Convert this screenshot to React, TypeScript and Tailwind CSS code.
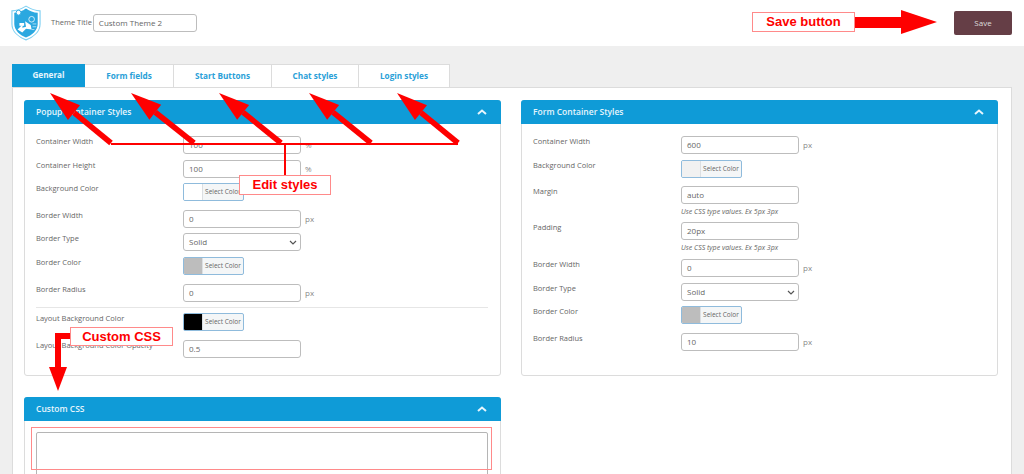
import React from "react";

const font = "font-['Open_Sans',sans-serif]";

function Chevron() {
  return (
    <svg width="10" height="6" viewBox="0 0 10 6" className="block">
      <path d="M1 5 L5 1.5 L9 5" fill="none" stroke="#e6f5fc" strokeWidth="2" />
    </svg>
  );
}

function Card({ title, className, children }: { title: string; className: string; children: React.ReactNode }) {
  return (
    <section className={`border border-[#dcdcdc] rounded-[3px] bg-white ${className}`}>
      <header className="h-[24px] -mx-px -mt-px bg-[#0f9bd7] rounded-t-[3px] flex items-center justify-between pl-[12px] pr-[14px]">
        <h2 className="text-[8.5px] font-semibold text-[#e6f5fc]">{title}</h2>
        <Chevron />
      </header>
      {children}
    </section>
  );
}

function Row({ label, mt, children, labelW }: { label: string; mt: string; labelW: string; children: React.ReactNode }) {
  return (
    <div className={`flex items-start ${mt}`}>
      <label className={`${labelW} text-[7.5px] leading-[12px] text-[#666] -mt-[1px] shrink-0`}>{label}</label>
      {children}
    </div>
  );
}

function TextInput({ value, unit }: { value: string; unit?: string }) {
  return (
    <div className="flex items-center">
      <div className="w-[118px] h-[18px] border border-[#bdbdbd] rounded-[3px] bg-white flex items-center pl-[5px] text-[8px] text-[#666]">
        {value}
      </div>
      {unit && <span className="ml-[4px] text-[8px] text-[#888]">{unit}</span>}
    </div>
  );
}

function SelectInput() {
  return (
    <div className="w-[118px] h-[18px] border border-[#bdbdbd] rounded-[3px] bg-white flex items-center justify-between pl-[5px] pr-[3px] text-[8px] text-[#666]">
      Solid
      <svg width="8" height="5" viewBox="0 0 8 5"><path d="M1 1 L4 4 L7 1" fill="none" stroke="#555" strokeWidth="1.2" /></svg>
    </div>
  );
}

function ColorBtn({ swatch }: { swatch: string }) {
  return (
    <div className="w-[61px] h-[18px] border border-[#8fbbdc] rounded-[2px] flex overflow-hidden bg-[#f4f6f7]">
      <span className={`w-[18px] h-full ${swatch}`} />
      <span className="flex-1 flex items-center justify-center text-[6.5px] text-[#666] border-l border-[#dcdfe2]">Select Color</span>
    </div>
  );
}

function Hint() {
  return <p className="text-[7px] italic text-[#666] leading-[9px] mt-[3px]">Use CSS type values. Ex 5px 3px</p>;
}

function Arrow({ x, y, tx, ty }: { x: number; y: number; tx: number; ty: number }) {
  const dx = tx - x;
  const dy = ty - y;
  const len = Math.hypot(dx, dy);
  const ux = dx / len;
  const uy = dy / len;
  const bx = tx - ux * 31;
  const by = ty - uy * 31;
  const px = -uy * 9.5;
  const py = ux * 9.5;
  return (
    <g>
      <line x1={x} y1={y} x2={bx} y2={by} stroke="#fe0000" strokeWidth="5.5" />
      <polygon points={`${tx},${ty} ${bx + px},${by + py} ${bx - px},${by - py}`} fill="#fe0000" />
    </g>
  );
}

function Callout({ text, className }: { text: string; className: string }) {
  return (
    <div className={`absolute border border-[#ff8a8a] bg-white flex items-center justify-center font-['Liberation_Sans',sans-serif] font-bold text-[13px] text-[#fe0000] ${className}`}>
      {text}
    </div>
  );
}

function Logo() {
  return (
    <svg width="30" height="36" viewBox="0 0 32 38" className="block">
      <path d="M1 6 C7 6 11 4 16 1 C21 4 26 6 31 6 L31 20 C31 28 24 34 16 37 C8 34 1 28 1 20 Z" fill="none" stroke="#7fd0f2" strokeWidth="1.2" />
      <path d="M3.5 8 C9 8 12 6 16 3.5 C20 6 24 8 28.5 8 L28.5 20 C28.5 27 22 32 16 34.5 C10 32 3.5 27 3.5 20 Z" fill="#2ba8e0" />
      <circle cx="8" cy="8" r="2.6" fill="#fff" stroke="#2ba8e0" />
      <circle cx="22" cy="15" r="3" fill="none" stroke="#fff" strokeWidth=".8" />
      <path d="M7 26 L13 20 L12 24 L16 23 L15 17 L21 21 L22 26 L16 25 L12 29 Z" fill="#fff" />
      <path d="M9 19 h5 v3 h-5 z" fill="#fff" />
      <path d="M23 20 h4 M23 23 h4 M22 26 h3" stroke="#cdeefb" strokeWidth=".8" />
    </svg>
  );
}

const L = "w-[147px]";
const R = "w-[148px]";

export default function App() {
  return (
    <div className={`relative w-[1024px] h-[474px] overflow-hidden bg-[#efefef] ${font}`}>
      <header className="h-[46px] bg-white flex items-center pl-[11px] pr-[12px]">
        <Logo />
        <span className="ml-[10px] text-[7.5px] text-[#666]">Theme Title</span>
        <div className="ml-[1px] w-[104px] h-[18px] border border-[#bdbdbd] rounded-[3px] flex items-center pl-[5px] text-[8px] text-[#666]">Custom Theme 2</div>
        <button className="ml-auto w-[58px] h-[24px] bg-[#653e46] rounded-[2px] text-[8px] text-[#ddd]">Save</button>
      </header>

      <main className="pl-[12px] pr-[12px] pt-[18px]">
        <nav className="flex h-[23px] text-[8.2px] font-bold text-[#2a9fd8]">
          <div className="w-[73px] bg-[#0f9bd7] text-[#e6f5fc] flex items-center justify-center">General</div>
          <div className="w-[89px] bg-white border-r border-t border-[#dcdcdc] flex items-center justify-center">Form fields</div>
          <div className="w-[98px] bg-white border-r border-t border-[#dcdcdc] flex items-center justify-center">Start Buttons</div>
          <div className="w-[87px] bg-white border-r border-t border-[#dcdcdc] flex items-center justify-center">Chat styles</div>
          <div className="w-[91px] bg-white border-r border-t border-[#dcdcdc] flex items-center justify-center">Login styles</div>
        </nav>
        <div className="h-[400px] bg-white border border-[#dcdcdc] px-[11px] pt-[12px] grid grid-cols-[477px_477px] gap-x-[20px] content-start">
          <div>
            <Card title="Popup Container Styles" className="h-[276px]">
              <div className="pt-[12px] pl-[11px] pr-[12px]">
                <Row labelW={L} mt="" label="Container Width"><TextInput value="100" unit="%" /></Row>
                <Row labelW={L} mt="mt-[6px]" label="Container Height"><TextInput value="100" unit="%" /></Row>
                <Row labelW={L} mt="mt-[5px]" label="Background Color"><ColorBtn swatch="bg-white" /></Row>
                <Row labelW={L} mt="mt-[9px]" label="Border Width"><TextInput value="0" unit="px" /></Row>
                <Row labelW={L} mt="mt-[5px]" label="Border Type"><SelectInput /></Row>
                <Row labelW={L} mt="mt-[6px]" label="Border Color"><ColorBtn swatch="bg-[#bdbdbd]" /></Row>
                <Row labelW={L} mt="mt-[9px]" label="Border Radius"><TextInput value="0" unit="px" /></Row>
                <div className="h-px bg-[#e6e6e6] mt-[5px] mb-[5px]" />
                <Row labelW={L} mt="" label="Layout Background Color"><ColorBtn swatch="bg-black" /></Row>
                <Row labelW={L} mt="mt-[9px]" label="Layout Background Color Opacity"><TextInput value="0.5" /></Row>
              </div>
            </Card>
            <Card title="Custom CSS" className="mt-[21px] h-[120px]">
              <div className="mt-[11px] ml-[11px] mr-[12px] h-[90px] border border-[#b5b5b5] rounded-[2px]" />
            </Card>
          </div>
          <Card title="Form Container Styles" className="h-[276px]">
            <div className="pt-[12px] pl-[11px] pr-[12px]">
              <Row labelW={R} mt="" label="Container Width"><TextInput value="600" unit="px" /></Row>
              <Row labelW={R} mt="mt-[6px]" label="Background Color"><ColorBtn swatch="bg-[#f1f1f1]" /></Row>
              <Row labelW={R} mt="mt-[8px]" label="Margin"><div><TextInput value="auto" /><Hint /></div></Row>
              <Row labelW={R} mt="mt-[6px]" label="Padding"><div><TextInput value="20px" /><Hint /></div></Row>
              <Row labelW={R} mt="mt-[7px]" label="Border Width"><TextInput value="0" unit="px" /></Row>
              <Row labelW={R} mt="mt-[6px]" label="Border Type"><SelectInput /></Row>
              <Row labelW={R} mt="mt-[5px]" label="Border Color"><ColorBtn swatch="bg-[#bdbdbd]" /></Row>
              <Row labelW={R} mt="mt-[9px]" label="Border Radius"><TextInput value="10" unit="px" /></Row>
            </div>
          </Card>
        </div>
      </main>

      <svg width="1024" height="474" className="absolute inset-0 pointer-events-none">
        <Arrow x={111} y={143} tx={50} ty={93} />
        <Arrow x={194} y={143} tx={131} ty={93} />
        <Arrow x={281} y={143} tx={219} ty={93} />
        <Arrow x={371} y={143} tx={309} ty={93} />
        <Arrow x={458} y={143} tx={397} ty={93} />
        <path d="M111 144 H458 M285 144 V176" fill="none" stroke="#fe0000" strokeWidth="2" />
        <polygon points="855,17 901,17 901,10 937,22 901,34 901,28 855,28" fill="#fe0000" />
        <polygon points="70,333 55,333 55,367 49,367 58,391 67,367 61,367 61,339 70,339" fill="#fe0000" />
        <rect x="31.5" y="427.5" width="460" height="42" fill="none" stroke="#ff8a8a" />
      </svg>
      <Callout text="Save button" className="left-[752px] top-[12px] w-[103px] h-[20px]" />
      <Callout text="Edit styles" className="left-[239px] top-[175px] w-[92px] h-[20px]" />
      <Callout text="Custom CSS" className="left-[70px] top-[327px] w-[103px] h-[19px]" />
    </div>
  );
}
